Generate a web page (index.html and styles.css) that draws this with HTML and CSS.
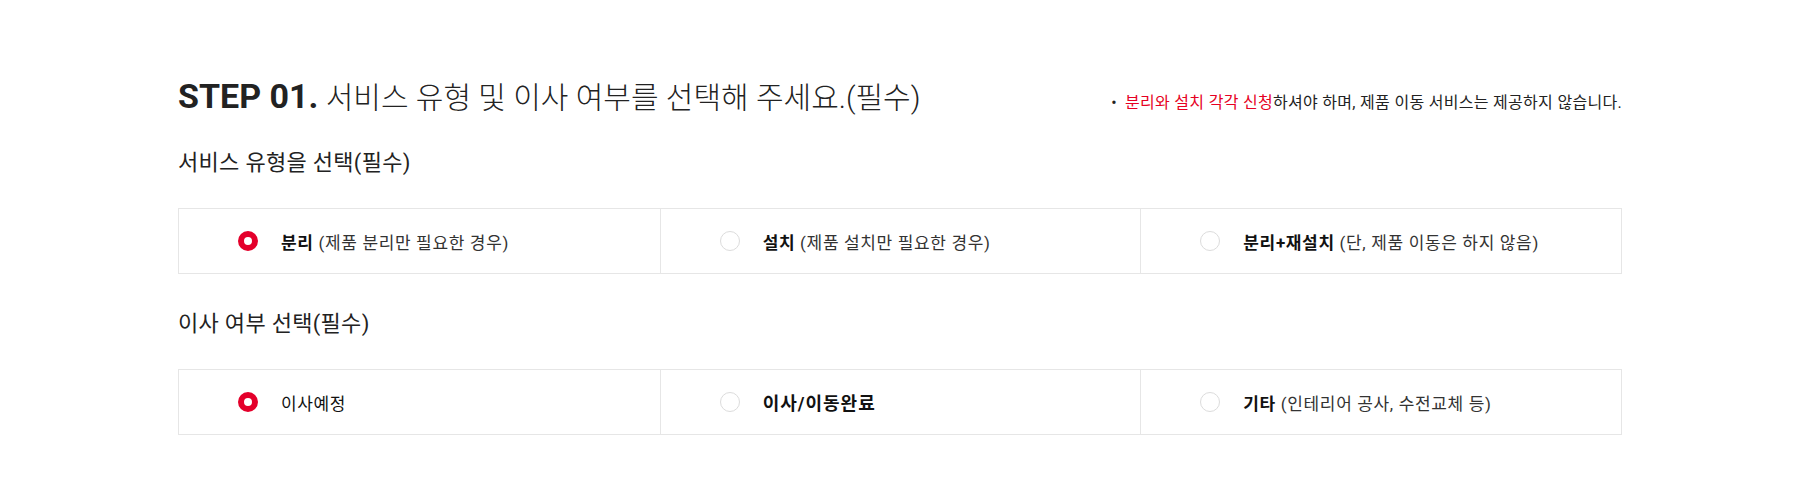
FILE: index.html
```html
<!DOCTYPE html>
<html lang="ko">
<head>
    <meta charset="UTF-8">
    <meta name="viewport" content="width=device-width, initial-scale=1.0">
    <title>STEP 01 서비스 유형 선택</title>
    <link rel="stylesheet" href="styles.css">
</head>
<body>
    <div class="wrap">
        <div class="step-head">
            <h2 class="step-title"><strong>STEP 01.</strong> 서비스 유형 및 이사 여부를 선택해 주세요.(필수)</h2>
            <p class="notice"><span class="red">분리와 설치 각각 신청</span>하셔야 하며, 제품 이동 서비스는 제공하지 않습니다.</p>
        </div>

        <h3 class="sub-title">서비스 유형을 선택(필수)</h3>
        <ul class="choice-list">
            <li class="choice is-checked">
                <span class="radio"></span>
                <span class="label"><b>분리</b> (제품 분리만 필요한 경우)</span>
            </li>
            <li class="choice">
                <span class="radio"></span>
                <span class="label"><b>설치</b> (제품 설치만 필요한 경우)</span>
            </li>
            <li class="choice">
                <span class="radio"></span>
                <span class="label"><b>분리+재설치</b> (단, 제품 이동은 하지 않음)</span>
            </li>
        </ul>

        <h3 class="sub-title second">이사 여부 선택(필수)</h3>
        <ul class="choice-list">
            <li class="choice is-checked">
                <span class="radio"></span>
                <span class="label plain">이사예정</span>
            </li>
            <li class="choice">
                <span class="radio"></span>
                <span class="label wide"><b>이사/이동완료</b></span>
            </li>
            <li class="choice">
                <span class="radio"></span>
                <span class="label"><b>기타</b> (인테리어 공사, 수전교체 등)</span>
            </li>
        </ul>
    </div>
</body>
</html>
```

FILE: styles.css
```css
body {
    margin: 0;
    padding: 0;
    background-color: #fff;
    color: #222;
    font-family: Roboto, "Noto Sans CJK KR", sans-serif;
}

.wrap {
    width: 1444px;
    margin: 0 auto;
    padding-top: 76px;
}

.step-head {
    display: flex;
    justify-content: space-between;
    align-items: baseline;
}

.step-title {
    margin: 0;
    font-size: 30px;
    line-height: 40px;
    font-weight: 300;
    color: #222;
}

.step-title strong {
    font-size: 34px;
    font-weight: 700;
}

.notice {
    margin: 0;
    font-size: 16px;
    color: #222;
    letter-spacing: 0.3px;
}

.notice::before {
    content: "\2022";
    margin-right: 8px;
}

.notice .red {
    color: #e60023;
}

.sub-title {
    margin: 30px 0 0;
    font-size: 22px;
    line-height: 30px;
    font-weight: 400;
    color: #222;
    letter-spacing: 0.3px;
}

.sub-title.second {
    margin-top: 35px;
}

.choice-list {
    display: grid;
    grid-template-columns: repeat(3, 1fr);
    margin: 30px 0 0;
    padding: 0;
    list-style: none;
    border: 1px solid #e6e6e6;
}

.choice {
    display: flex;
    align-items: center;
    height: 64px;
    padding-left: 59px;
    border-left: 1px solid #e6e6e6;
}

.choice:first-child {
    border-left: none;
}

.radio {
    box-sizing: border-box;
    width: 20px;
    height: 20px;
    border: 1px solid #dcdcdc;
    border-radius: 50%;
    margin-right: 23px;
}

.is-checked .radio {
    border: 6px solid #e4002b;
}

.label {
    font-size: 17px;
    color: #333;
    letter-spacing: 0.65px;
}

.label b {
    font-weight: 700;
    color: #111;
}

.label.plain {
    color: #111;
}

.label.wide {
    font-size: 18px;
    letter-spacing: 1px;
}
```
